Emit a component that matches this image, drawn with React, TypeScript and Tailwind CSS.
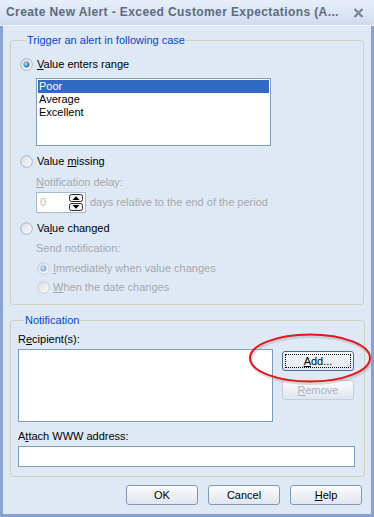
import React from "react";

const Radio = ({ checked = false, disabled = false }: { checked?: boolean; disabled?: boolean }) => (
  <svg width="13" height="13" viewBox="0 0 13 13" className="shrink-0">
    <defs>
      <linearGradient id="rfill" x1="0" y1="0" x2="1" y2="1">
        <stop offset="0" stopColor="#d4d9e0" />
        <stop offset="1" stopColor="#ffffff" />
      </linearGradient>
      <radialGradient id="rdot" cx="0.4" cy="0.4" r="0.7">
        <stop offset="0" stopColor="#c6e0fb" />
        <stop offset="0.6" stopColor="#4a86cf" />
        <stop offset="1" stopColor="#2b5f9e" />
      </radialGradient>
    </defs>
    <circle cx="6.5" cy="6.5" r="5.8" fill="url(#rfill)" stroke={disabled ? "#c9ced6" : "#a9b3c1"} strokeWidth="1" />
    {checked && <circle cx="6.5" cy="6.5" r="3" fill="url(#rdot)" opacity={disabled ? 0.55 : 1} />}
  </svg>
);

const U = ({ children }: { children: React.ReactNode }) => <span className="underline underline-offset-[1px]">{children}</span>;

const Btn = ({ children, focus = false, disabled = false }: { children: React.ReactNode; focus?: boolean; disabled?: boolean }) => (
  <div
    className={`w-[72px] h-[20px] rounded-[3px] border flex items-center justify-center p-[2px] bg-gradient-to-b from-[#fbfcfe] to-[#dfe6ef] ${
      disabled ? "border-[#c5cfdc] text-[#a9b1bd]" : focus ? "border-[#4d6a93]" : "border-[#8597b0]"
    }`}
  >
    <div className={`w-full h-full flex items-center justify-center ${focus ? "border border-dotted border-black" : ""}`}>{children}</div>
  </div>
);

export default function App() {
  return (
    <div className="relative w-[374px] h-[517px] flex flex-col bg-[#dfe9f6] font-['Liberation_Sans',Arial,sans-serif] text-[11px] leading-[13px] text-black">
      {/* title bar */}
      <div className="h-[26px] shrink-0 flex items-center justify-between pl-[6px] pr-[10px] bg-gradient-to-b from-[#e8eff9] to-[#cfdcee] border-b border-[#edf3fb]">
        <span className="font-bold text-[12px] tracking-[0.4px] text-[#5d6b82] whitespace-nowrap">
          Create New Alert - Exceed Customer Expectations (A...
        </span>
        <svg width="11" height="10" viewBox="0 0 11 10">
          <path d="M1.5 1 L9.5 9 M9.5 1 L1.5 9" stroke="#76839a" strokeWidth="2.2" />
        </svg>
      </div>

      <div className="flex-1 flex flex-col px-[7px] border-x-[3px] border-b-[3px] border-[#86a3d2]">
        {/* Trigger group */}
        <fieldset className="mt-[8px] border border-[#cfd2bf] rounded-[3px] pl-[9px] pr-[9px] pb-[10px] flex flex-col">
          <legend className="ml-[6px] px-[1px] text-[#0046d5]">Trigger an alert in following case</legend>
          <label className="mt-[11px] flex items-center gap-[4px] h-[13px]">
            <Radio checked />
            <span><U>V</U>alue enters range</span>
          </label>
          <div className="mt-[7px] ml-[16px] w-[235px] h-[68px] bg-white border border-[#7f9db9] p-[1px] flex flex-col">
            <div className="h-[13px] bg-[#316ac5] text-white px-[1px]">Poor</div>
            <div className="h-[13px] px-[1px]">Average</div>
            <div className="h-[13px] px-[1px]">Excellent</div>
          </div>
          <label className="mt-[9px] flex items-center gap-[4px] h-[13px]">
            <Radio />
            <span>Value <U>m</U>issing</span>
          </label>
          <div className="mt-[8px] ml-[16px] h-[13px] text-[#a3a8ae]">
            <U>N</U>otification delay:
          </div>
          <div className="mt-[3px] ml-[16px] flex items-center gap-[4px]">
            <div className="w-[50px] h-[21px] bg-white border border-[#a9b8cc] flex items-center justify-between pl-[3px] pr-[2px]">
              <span className="text-[#b7bcc2]">0</span>
              <div className="flex flex-col gap-[1px]">
                <svg width="14" height="8" viewBox="0 0 14 8">
                  <rect x="0.5" y="0.5" width="13" height="7" rx="2" fill="#eef2f7" stroke="#2b2b2b" />
                  <path d="M3.5 6 L7 2.2 L10.5 6 Z" fill="#000" />
                </svg>
                <svg width="14" height="8" viewBox="0 0 14 8">
                  <rect x="0.5" y="0.5" width="13" height="7" rx="2" fill="#eef2f7" stroke="#2b2b2b" />
                  <path d="M3.5 2 L7 5.8 L10.5 2 Z" fill="#000" />
                </svg>
              </div>
            </div>
            <span className="text-[#a3a8ae]">days relative to the end of the period</span>
          </div>
          <label className="mt-[9px] flex items-center gap-[4px] h-[13px]">
            <Radio />
            <span>Va<U>l</U>ue changed</span>
          </label>
          <div className="mt-[7px] ml-[16px] h-[13px] text-[#a3a8ae]">Send notification:</div>
          <label className="mt-[7px] ml-[17px] flex items-center gap-[3px] h-[13px] text-[#a3a8ae]">
            <Radio checked disabled />
            <span><U>I</U>mmediately when value changes</span>
          </label>
          <label className="mt-[6px] ml-[17px] flex items-center gap-[3px] h-[13px] text-[#a3a8ae]">
            <Radio disabled />
            <span><U>W</U>hen the date changes</span>
          </label>
        </fieldset>

        {/* Notification group */}
        <fieldset className="mt-[9px] border border-[#cfd2bf] rounded-[3px] pl-[7px] pr-[9px] pb-[9px] flex flex-col">
          <legend className="ml-[6px] px-[1px] text-[#0046d5]">Notification</legend>
          <div className="mt-[6px] h-[13px]">
            R<U>e</U>cipient(s):
          </div>
          <div className="mt-[3px] flex gap-[9px]">
            <div className="w-[255px] h-[73px] bg-white border border-[#7f9db9]" />
            <div className="mt-[2px] flex flex-col gap-[9px]">
              <Btn focus>
                <span><U>A</U>dd...</span>
              </Btn>
              <Btn disabled>
                <span><U>R</U>emove</span>
              </Btn>
            </div>
          </div>
          <div className="mt-[8px] h-[13px]">
            A<U>t</U>tach WWW address:
          </div>
          <div className="mt-[3px] w-[337px] h-[21px] bg-white border border-[#7f9db9]" />
        </fieldset>

        <div className="mt-[8px] flex justify-end gap-[10px] pr-[2px]">
          <Btn>OK</Btn>
          <Btn>Cancel</Btn>
          <Btn>
            <span><U>H</U>elp</span>
          </Btn>
        </div>
      </div>

      {/* red highlight ellipse */}
      <svg className="absolute left-[246px] top-[331px] pointer-events-none" width="128" height="56" viewBox="0 0 128 56">
        <ellipse cx="65" cy="29" rx="60" ry="23.5" fill="none" stroke="#9a9a9a" strokeOpacity="0.35" strokeWidth="3" />
        <ellipse cx="64" cy="27" rx="60" ry="23.5" fill="none" stroke="#e8141c" strokeWidth="2" />
      </svg>
    </div>
  );
}
